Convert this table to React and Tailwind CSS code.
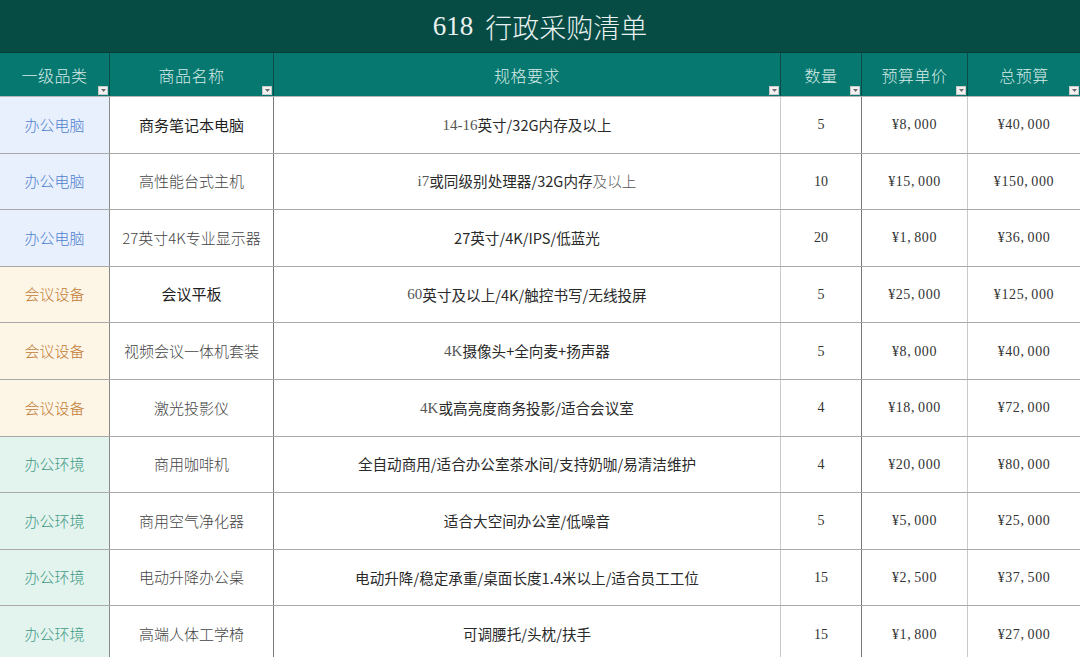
import React from "react";

const SANS = "font-['Noto_Sans_CJK_SC','Noto_Sans',sans-serif]";
const SERIF = "font-['Liberation_Serif','Noto_Sans_CJK_SC',serif]";

const cats = {
  pc: { label: "办公电脑", bg: "bg-[#e8f0fd]", fg: "text-[#4f7fd0]" },
  meet: { label: "会议设备", bg: "bg-[#fdf5e6]", fg: "text-[#c27a33]" },
  env: { label: "办公环境", bg: "bg-[#e3f3ee]", fg: "text-[#3f9a84]" },
};

const rows = [
  { c: "pc", name: "商务笔记本电脑", bold: true, spec: [["14-16", "r"], ["英寸/32G内存及以上", "s"]], q: "5", p: "¥8,000", t: "¥40,000" },
  { c: "pc", name: "高性能台式主机", spec: [["i7", "r"], ["或同级别处理器/32G内存", "s"], ["及以上", "l"]], q: "10", p: "¥15,000", t: "¥150,000" },
  { c: "pc", name: "27英寸4K专业显示器", spec: [["27英寸/4K/IPS/低蓝光", "s"]], q: "20", p: "¥1,800", t: "¥36,000" },
  { c: "meet", name: "会议平板", bold: true, spec: [["60", "r"], ["英寸及以上/4K/触控书写/无线投屏", "s"]], q: "5", p: "¥25,000", t: "¥125,000" },
  { c: "meet", name: "视频会议一体机套装", spec: [["4K", "r"], ["摄像头+全向麦+扬声器", "s"]], q: "5", p: "¥8,000", t: "¥40,000" },
  { c: "meet", name: "激光投影仪", spec: [["4K", "r"], ["或高亮度商务投影/适合会议室", "s"]], q: "4", p: "¥18,000", t: "¥72,000" },
  { c: "env", name: "商用咖啡机", spec: [["全自动商用/适合办公室茶水间/支持奶咖/易清洁维护", "s"]], q: "4", p: "¥20,000", t: "¥80,000" },
  { c: "env", name: "商用空气净化器", spec: [["适合大空间办公室/低噪音", "s"]], q: "5", p: "¥5,000", t: "¥25,000" },
  { c: "env", name: "电动升降办公桌", spec: [["电动升降/稳定承重/桌面长度1.4米以上/适合员工工位", "s"]], q: "15", p: "¥2,500", t: "¥37,500" },
  { c: "env", name: "高端人体工学椅", spec: [["可调腰托/头枕/扶手", "s"]], q: "15", p: "¥1,800", t: "¥27,000" },
];

const headers = ["一级品类", "商品名称", "规格要求", "数量", "预算单价", "总预算"];

function Filter() {
  return (
    <span className="absolute bottom-[1px] right-[1px] w-[10px] h-[9px] bg-[#f2f2f2] border border-[#c8c8c8] flex items-center justify-center">
      <svg width="5" height="3" viewBox="0 0 5 3">
        <path d="M0 0H5L2.5 3Z" fill="#6b6b6b" />
      </svg>
    </span>
  );
}

function Money({ v }) {
  const [a, b] = v.split(",");
  return (
    <span className="tracking-[0.6px]">
      {a}
      <span className="mr-[3px]">,</span>
      {b}
    </span>
  );
}

const cols = "grid grid-cols-[110px_164px_507px_81px_106px_112px]";

export default function App() {
  return (
    <div className={`w-[1080px] h-[657px] overflow-hidden bg-white ${SANS}`}>
      <div className="h-[52px] bg-[#064b44] flex items-center justify-center text-[#e9f2f0] text-[27px] leading-none">
        <span className={`${SERIF} text-[27px] mr-[12px] font-light`}>618</span>
        <span className="font-light">行政采购清单</span>
      </div>
      <div className={`${cols} h-[44px] bg-[#067870] border-t border-[#053d37]`}>
        {headers.map((h, i) => (
          <div
            key={i}
            className={`relative flex items-center justify-center text-[16px] text-[#d6ebe7] font-light tracking-[0.5px] ${i < 5 ? "border-r border-[#0a4d46]" : ""}`}
          >
            {h}
            <Filter />
          </div>
        ))}
      </div>
      <div className="border-t border-[#b5b5b5]">
        {rows.map((r, i) => {
          const cat = cats[r.c];
          return (
            <div key={i} className={`${cols} h-[56.6px] border-b border-[#a9a9a9]`}>
              <div className={`${cat.bg} ${cat.fg} flex items-center justify-center text-[15px] font-light border-r border-[#8a8a8a]`}>
                {cat.label}
              </div>
              <div
                className={`flex items-center justify-center border-r border-[#7a7a7a] text-[15px] ${
                  r.bold ? "text-[#1f1f1f]" : "text-[#444] font-light"
                }`}
              >
                {r.name}
              </div>
              <div className="flex items-center justify-center border-r border-[#c9c9c9] text-[14.6px] text-[#2a2a2a]">
                {r.spec.map(([t, k], j) =>
                  k === "r" ? (
                    <span key={j} className={`${SERIF} text-[15px] text-[#555]`}>{t}</span>
                  ) : k === "l" ? (
                    <span key={j} className="text-[#555] font-light">{t}</span>
                  ) : (
                    <span key={j}>{t}</span>
                  )
                )}
              </div>
              <div className={`flex items-center justify-center border-r border-[#7a7a7a] ${SERIF} text-[14px] text-[#333]`}>
                {r.q}
              </div>
              <div className={`flex items-center justify-center border-r border-[#c9c9c9] ${SERIF} text-[14px] text-[#333]`}>
                <Money v={r.p} />
              </div>
              <div className={`flex items-center justify-center ${SERIF} text-[14px] text-[#333]`}>
                <Money v={r.t} />
              </div>
            </div>
          );
        })}
      </div>
    </div>
  );
}
